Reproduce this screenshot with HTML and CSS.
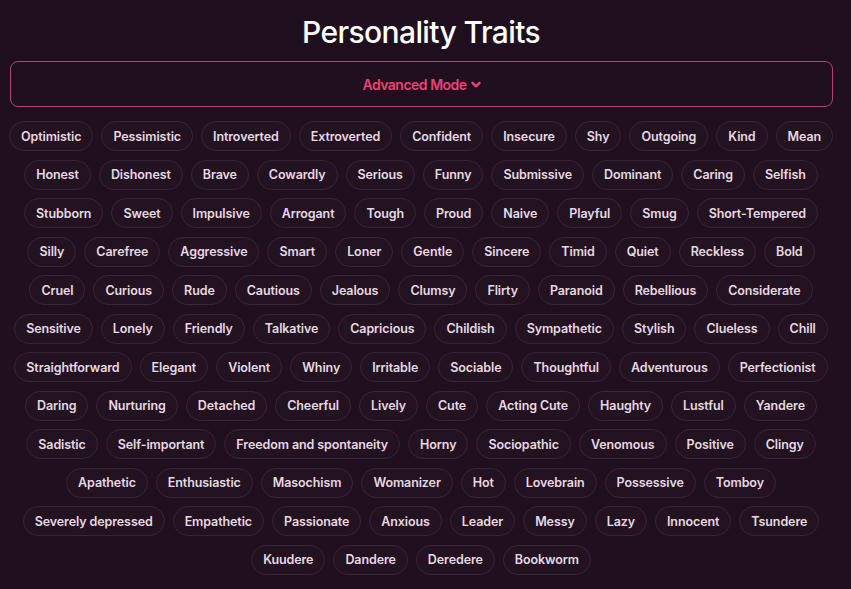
FILE: index.html
```html
<!DOCTYPE html>
<html lang="en">
<head>
<meta charset="utf-8">
<title>Personality Traits</title>
<link rel="stylesheet" href="styles.css">
</head>
<body>
<main class="page">
  <h1 class="title">Personality Traits</h1>
  <button class="mode-toggle" type="button">
    <span>Advanced Mode</span>
    <svg class="chev" viewBox="0 0 10 8" width="10" height="8" aria-hidden="true"><path d="M1.5 1.8 L5 5.3 L8.5 1.8" fill="none" stroke="currentColor" stroke-width="2.4" stroke-linecap="round" stroke-linejoin="round"/></svg>
  </button>
  <section class="traits">
    <div class="row">
      <span class="chip">Optimistic</span><span class="chip">Pessimistic</span><span class="chip">Introverted</span><span class="chip">Extroverted</span><span class="chip">Confident</span><span class="chip">Insecure</span><span class="chip">Shy</span><span class="chip">Outgoing</span><span class="chip">Kind</span><span class="chip">Mean</span>
    </div>
    <div class="row">
      <span class="chip">Honest</span><span class="chip">Dishonest</span><span class="chip">Brave</span><span class="chip">Cowardly</span><span class="chip">Serious</span><span class="chip">Funny</span><span class="chip">Submissive</span><span class="chip">Dominant</span><span class="chip">Caring</span><span class="chip">Selfish</span>
    </div>
    <div class="row">
      <span class="chip">Stubborn</span><span class="chip">Sweet</span><span class="chip">Impulsive</span><span class="chip">Arrogant</span><span class="chip">Tough</span><span class="chip">Proud</span><span class="chip">Naive</span><span class="chip">Playful</span><span class="chip">Smug</span><span class="chip">Short-Tempered</span>
    </div>
    <div class="row">
      <span class="chip">Silly</span><span class="chip">Carefree</span><span class="chip">Aggressive</span><span class="chip">Smart</span><span class="chip">Loner</span><span class="chip">Gentle</span><span class="chip">Sincere</span><span class="chip">Timid</span><span class="chip">Quiet</span><span class="chip">Reckless</span><span class="chip">Bold</span>
    </div>
    <div class="row">
      <span class="chip">Cruel</span><span class="chip">Curious</span><span class="chip">Rude</span><span class="chip">Cautious</span><span class="chip">Jealous</span><span class="chip">Clumsy</span><span class="chip">Flirty</span><span class="chip">Paranoid</span><span class="chip">Rebellious</span><span class="chip">Considerate</span>
    </div>
    <div class="row">
      <span class="chip">Sensitive</span><span class="chip">Lonely</span><span class="chip">Friendly</span><span class="chip">Talkative</span><span class="chip">Capricious</span><span class="chip">Childish</span><span class="chip">Sympathetic</span><span class="chip">Stylish</span><span class="chip">Clueless</span><span class="chip">Chill</span>
    </div>
    <div class="row">
      <span class="chip">Straightforward</span><span class="chip">Elegant</span><span class="chip">Violent</span><span class="chip">Whiny</span><span class="chip">Irritable</span><span class="chip">Sociable</span><span class="chip">Thoughtful</span><span class="chip">Adventurous</span><span class="chip">Perfectionist</span>
    </div>
    <div class="row">
      <span class="chip">Daring</span><span class="chip">Nurturing</span><span class="chip">Detached</span><span class="chip">Cheerful</span><span class="chip">Lively</span><span class="chip">Cute</span><span class="chip">Acting Cute</span><span class="chip">Haughty</span><span class="chip">Lustful</span><span class="chip">Yandere</span>
    </div>
    <div class="row">
      <span class="chip">Sadistic</span><span class="chip">Self-important</span><span class="chip">Freedom and spontaneity</span><span class="chip">Horny</span><span class="chip">Sociopathic</span><span class="chip">Venomous</span><span class="chip">Positive</span><span class="chip">Clingy</span>
    </div>
    <div class="row">
      <span class="chip">Apathetic</span><span class="chip">Enthusiastic</span><span class="chip">Masochism</span><span class="chip">Womanizer</span><span class="chip">Hot</span><span class="chip">Lovebrain</span><span class="chip">Possessive</span><span class="chip">Tomboy</span>
    </div>
    <div class="row">
      <span class="chip">Severely depressed</span><span class="chip">Empathetic</span><span class="chip">Passionate</span><span class="chip">Anxious</span><span class="chip">Leader</span><span class="chip">Messy</span><span class="chip">Lazy</span><span class="chip">Innocent</span><span class="chip">Tsundere</span>
    </div>
    <div class="row">
      <span class="chip">Kuudere</span><span class="chip">Dandere</span><span class="chip">Deredere</span><span class="chip">Bookworm</span>
    </div>
  </section>
</main>
</body>
</html>
```

FILE: styles.css
```css
* { box-sizing: border-box; }

html, body {
  margin: 0;
  background: #200f1e;
}

body {
  font-family: "Inter", "Noto Sans", sans-serif;
  color: #e6d9e3;
}

.page {
  padding: 10px 10px 0;
  display: flex;
  flex-direction: column;
  align-items: stretch;
}

.title {
  margin: 0;
  height: 51px;
  padding: 0 9px 7px 0;
  display: flex;
  align-items: center;
  justify-content: center;
  font-family: "Inter", "Noto Sans", sans-serif;
  font-weight: 500;
  font-size: 30px;
  letter-spacing: -0.6px;
  color: #ffffff;
}

.mode-toggle {
  height: 46px;
  margin: 0 8px 14px 0;
  display: flex;
  align-items: center;
  justify-content: center;
  gap: 4px;
  background: transparent;
  border: 1.5px solid #b8426f;
  border-radius: 8px;
  font-family: "Inter", sans-serif;
  font-weight: 600;
  font-size: 14px;
  letter-spacing: -0.5px;
  color: #ea4373;
  cursor: pointer;
}

.chev { margin-top: 1px; }

.traits {
  display: flex;
  flex-direction: column;
  gap: 8.5px;
}

.row {
  display: flex;
  justify-content: center;
  gap: 8px;
  padding-right: 9px;
}

.chip {
  height: 30px;
  padding: 0 11px;
  display: inline-flex;
  align-items: center;
  border: 1px solid #3a2536;
  border-radius: 15px;
  background: #231220;
  font-size: 12.5px;
  font-weight: 600;
  letter-spacing: -0.1px;
  color: #e6d9e3;
  white-space: nowrap;
}
```
